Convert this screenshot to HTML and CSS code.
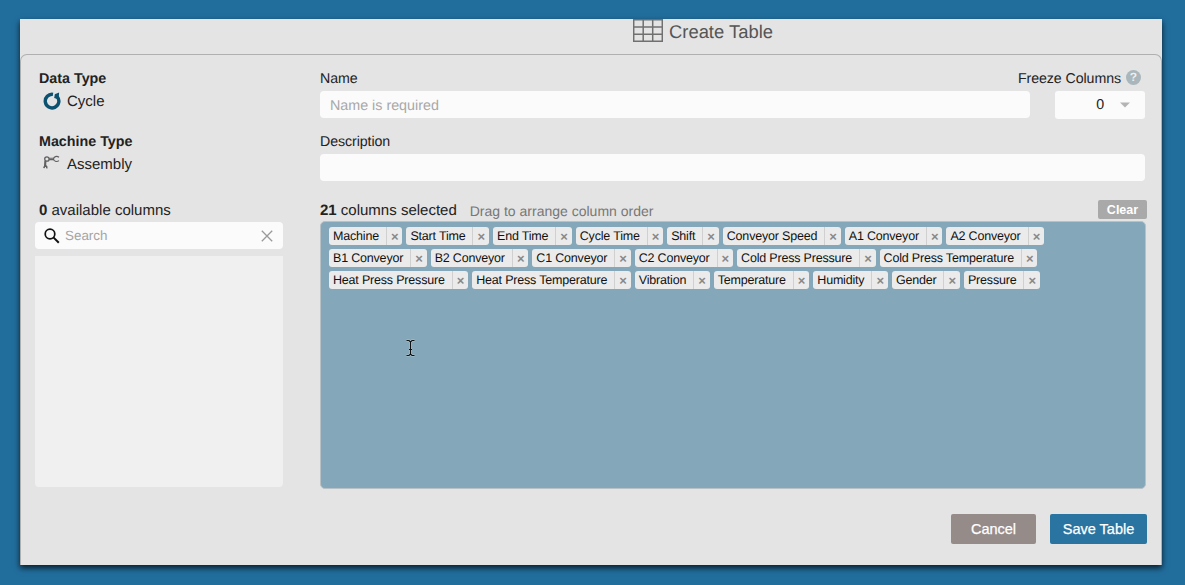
FILE: index.html
```html
<!DOCTYPE html>
<html lang="en">
<head>
<meta charset="utf-8">
<title>Create Table</title>
<link rel="stylesheet" href="styles.css">
</head>
<body>
<main class="dialog">
  <header class="title">
    <svg class="grid-icon" width="30" height="23" viewBox="0 0 30 23" fill="none" stroke="#707070" stroke-width="1.5"><path d="M.7 .7H29.3V22.3H.7ZM.7 8H29.3M.7 15.2H29.3M10.2 .7V22.3M19.7 .7V22.3"/></svg>
    <h1>Create Table</h1>
  </header>
  <section class="sheet">
    <aside class="side">
      <div class="type">
        <strong>Data Type</strong>
        <div class="kind">
          <svg width="18" height="18" viewBox="0 0 18 18"><path d="M10 2.4A6.8 6.8 0 1 0 14.3 4.8" fill="none" stroke="#0b5270" stroke-width="3.4"/><path d="M11.8 2.2L16.1 .6L15.8 5.4L13.6 6.8L11.2 6.1Z" fill="#0b5270"/></svg>
          <span>Cycle</span>
        </div>
      </div>
      <div class="type">
        <strong>Machine Type</strong>
        <div class="kind">
          <svg width="18" height="18" viewBox="0 0 18 18" fill="none" stroke="#606060"><circle cx="3.9" cy="4" r="2.2" stroke-width="1.3"/><path d="M6.1 3.2H10.5M6.1 4.6H10.5M16 2.3C13.8 .6 10.6 1.6 10.6 4S13.8 7.3 16 5.6" stroke-width="1.1"/><path d="M2.4 5.6L2 12" stroke-width="2.1"/><path d="M.9 13.2Q1.5 10.4 2.8 10.8T3.8 13.4" stroke-width="1.6"/></svg>
          <span>Assembly</span>
        </div>
      </div>
      <div class="available"><b>0</b> available columns</div>
      <div class="search">
        <svg width="16" height="16" viewBox="0 0 16 16" fill="none" stroke="#111"><circle cx="6" cy="6" r="4.8" stroke-width="1.7"/><path d="M9.4 9.4L14.8 14.8" stroke-width="2"/></svg>
        <span>Search</span>
        <svg width="12" height="12" viewBox="0 0 12 12" fill="none" stroke="#999" stroke-width="1.3"><path d="M.8 .8L11.2 11.2M11.2 .8L.8 11.2"/></svg>
      </div>
      <div class="list"></div>
    </aside>
    <div class="content">
      <div class="top">
        <label class="field name"><span>Name</span><span class="input">Name is required</span></label>
        <div class="field freeze">
          <span class="freeze-label">Freeze Columns <i class="help">?</i></span>
          <span class="select">0<svg width="10" height="6" viewBox="0 0 10 6"><path d="M0 .5H10L5 5.5Z" fill="#b4b4b4"/></svg></span>
        </div>
      </div>
      <label class="field description"><span>Description</span><span class="input"></span></label>
      <div class="selected-head">
        <span><b>21</b> columns selected</span>
        <span class="hint">Drag to arrange column order</span>
        <button class="clear">Clear</button>
      </div>
      <div class="selected">
        <div class="row">
          <span class="chip">Machine<i></i></span><span class="chip">Start Time<i></i></span><span class="chip">End Time<i></i></span><span class="chip">Cycle Time<i></i></span><span class="chip">Shift<i></i></span><span class="chip">Conveyor Speed<i></i></span><span class="chip">A1 Conveyor<i></i></span><span class="chip">A2 Conveyor<i></i></span>
        </div>
        <div class="row">
          <span class="chip">B1 Conveyor<i></i></span><span class="chip">B2 Conveyor<i></i></span><span class="chip">C1 Conveyor<i></i></span><span class="chip">C2 Conveyor<i></i></span><span class="chip">Cold Press Pressure<i></i></span><span class="chip">Cold Press Temperature<i></i></span>
        </div>
        <div class="row">
          <span class="chip">Heat Press Pressure<i></i></span><span class="chip">Heat Press Temperature<i></i></span><span class="chip">Vibration<i></i></span><span class="chip">Temperature<i></i></span><span class="chip">Humidity<i></i></span><span class="chip">Gender<i></i></span><span class="chip">Pressure<i></i></span>
        </div>
      </div>
      <footer class="actions"><button class="cancel">Cancel</button><button class="save">Save Table</button></footer>
    </div>
  </section>
</main>
<svg class="cursor" width="11" height="18" viewBox="0 0 11 18" fill="none"><path d="M1.5 1.5H4L5.5 3L7 1.5H9.5M5.5 3V15M1.5 16.5H4L5.5 15L7 16.5H9.5M4 10.5H7" stroke="#b2c8d2" stroke-width="2.2"/><path d="M1.5 1.5H4L5.5 3L7 1.5H9.5M5.5 3V15M1.5 16.5H4L5.5 15L7 16.5H9.5M4 10.5H7" stroke="#111" stroke-width="1.1"/></svg>
</body>
</html>
```
FILE: styles.css
```css
* { box-sizing: border-box; }
body {
  margin: 0;
  height: 585px;
  padding: 19px 23px 20px 20px;
  overflow: hidden;
  background: #216e9d;
  color: #222;
  font: 15px/18px "Liberation Sans", Arial, sans-serif;
  text-rendering: geometricPrecision;
}
.dialog {
  height: 546px;
  display: flex;
  flex-direction: column;
  background: #e4e4e4;
  box-shadow: 0 3px 6px rgba(0, 0, 0, .75);
}
.title { height: 35px; display: flex; gap: 6px; padding-left: 613px; color: #555; }
.title h1 { margin: 3px 0 0; font-size: 18.4px; font-weight: 400; line-height: 20px; }
.sheet {
  flex: 1;
  display: flex;
  gap: 37px;
  padding: 15px 14px 0 14px;
  border: 1px solid #b0b0b0;
  border-bottom: 0;
  border-radius: 7px 7px 0 0;
}
.side { width: 248px; }
.type { height: 63px; padding-left: 4px; }
.type strong { display: block; font-size: 14.3px; }
.kind { display: flex; align-items: center; gap: 6px; margin: 4px 0 0 4px; height: 20px; }
.kind svg { margin-bottom: 2px; }
.available { height: 27px; padding: 6px 0 0 4px; }
.search {
  display: flex;
  align-items: center;
  height: 27px;
  margin-top: -1px;
  padding: 0 10px 0 9px;
  border-radius: 4px;
  background: #fbfbfb;
  color: #a5a5a5;
  font-size: 13.4px;
}
.search span { flex: 1; padding-left: 5px; }
.list { height: 231px; margin-top: 7px; border-radius: 0 0 4px 4px; background: #f0f0f0; }
.content { width: 827px; }
.top { display: flex; gap: 25px; }
.field { display: flex; flex-direction: column; gap: 3px; height: 63px; font-size: 14.2px; letter-spacing: -.07px; }
.field .input {
  height: 27px;
  padding: 6px 10px 3px;
  border-radius: 4px;
  background: #fbfbfb;
  color: #a8a8a8;
  font-size: 14.3px;
  letter-spacing: 0;
}
.name { width: 710px; }
.description { width: 825px; }
.freeze { width: 90px; align-items: flex-end; }
.freeze-label { display: flex; height: 18px; gap: 5px; white-space: nowrap; }
.help {
  width: 15px;
  height: 15px;
  margin-right: 4px;
  border-radius: 50%;
  background: #a9b6bb;
  color: #eee;
  font: bold 12px/15px "Liberation Sans", Arial, sans-serif;
  text-align: center;
}
.select {
  width: 90px;
  height: 28px;
  display: flex;
  align-items: center;
  justify-content: flex-end;
  gap: 16px;
  padding-right: 15px;
  border-radius: 3px;
  background: #fbfbfb;
}
.selected-head { display: flex; height: 25px; padding-top: 5px; gap: 13px; line-height: 20px; }
.hint { color: #777; font-size: 14px; }
button { border: 0; border-radius: 2px; color: #fff; font: 14.5px "Liberation Sans", Arial, sans-serif; padding: 0; }
.clear { width: 49px; height: 19px; margin: -1px 0 0 auto; background: #a9a9a9; font-size: 12.5px; font-weight: 700; }
.selected {
  width: 826px;
  height: 268px;
  padding: 5px 8px;
  border: 1px solid #b8c1c5;
  border-radius: 5px;
  background: #84a8b9;
}
.row { display: flex; gap: 4px; margin-bottom: 4px; }
.chip {
  display: flex;
  height: 18px;
  padding-left: 4px;
  border-radius: 3px;
  background: #ebebeb;
  color: #111;
  font-size: 12.5px;
  letter-spacing: -.19px;
  white-space: nowrap;
}
.chip i { width: 16.5px; margin-left: 7px; border-left: 1px solid #d0d0d0; font: bold 13px/19px "Liberation Sans", Arial, sans-serif; color: #888; text-align: center; }
.chip i::before { content: "×"; }
.actions { display: flex; justify-content: flex-end; gap: 14px; padding-top: 25px; }
.actions button { height: 30px; -webkit-text-stroke: .25px; }
.actions .cancel { width: 85px; background: #958b89; }
.actions .save { width: 97px; background: #2974a0; }
.cursor { position: absolute; left: 405px; top: 339px; }
```
